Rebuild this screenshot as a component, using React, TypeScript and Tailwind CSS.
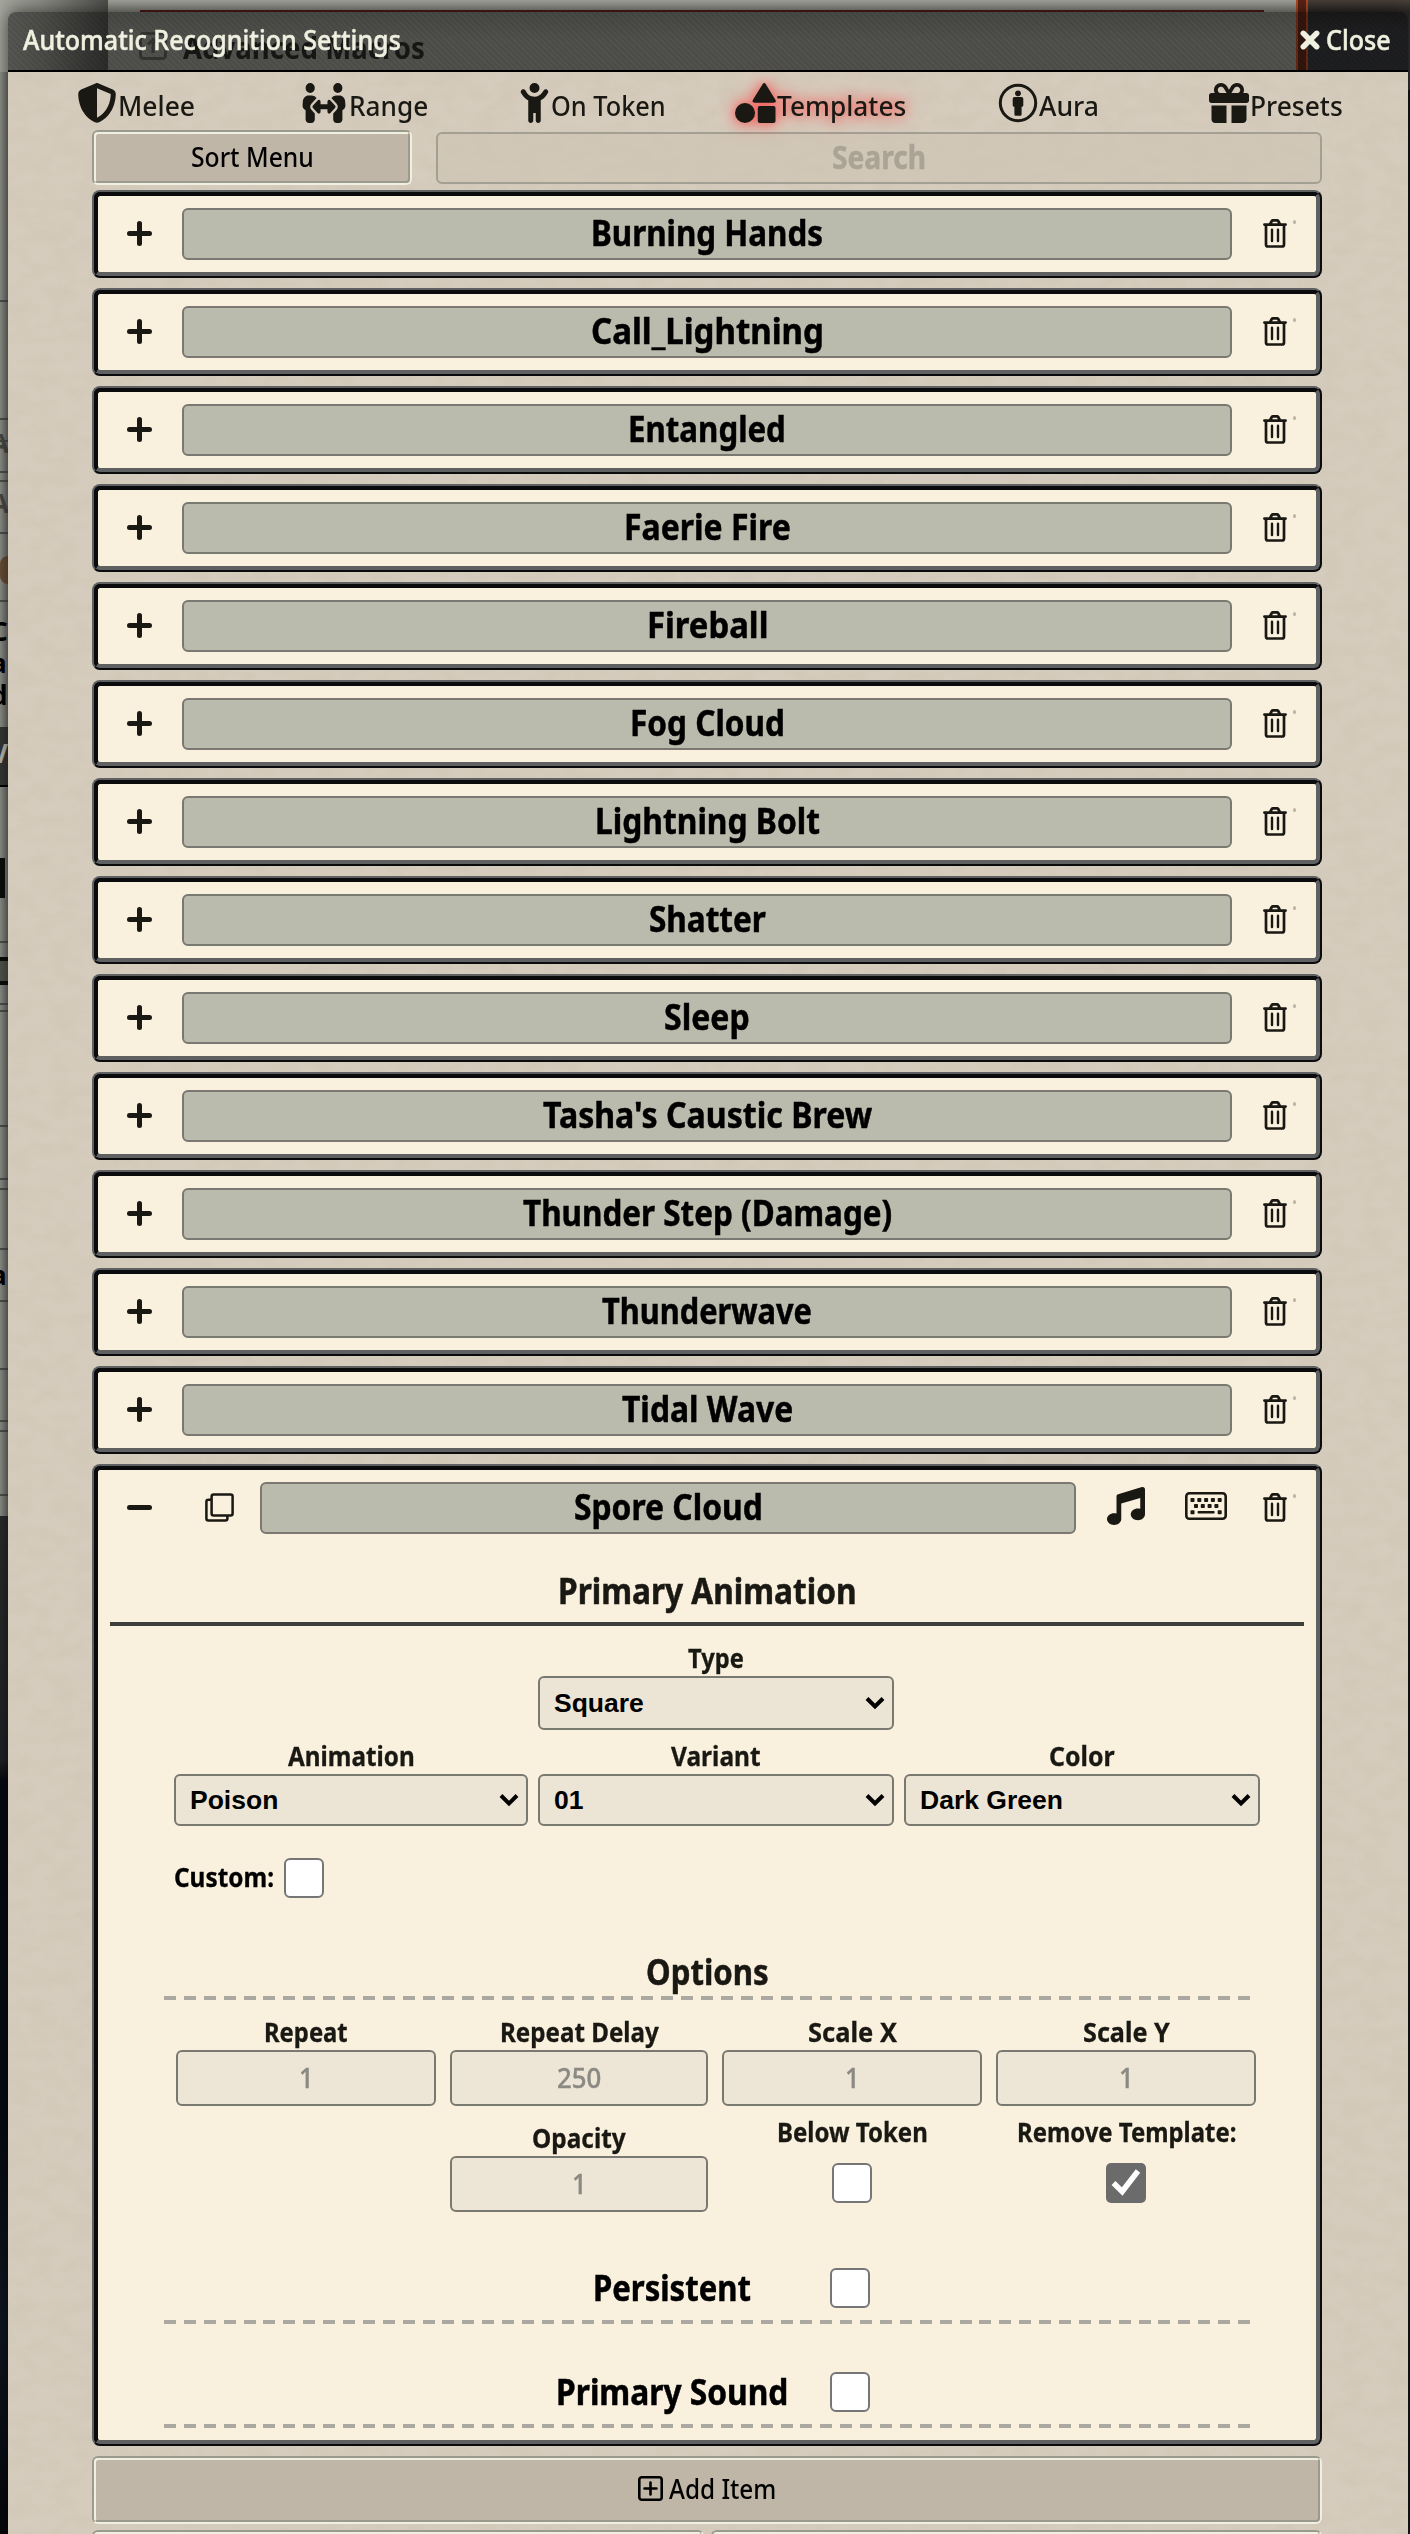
import { useLayoutEffect, useRef, type ReactNode } from "react";
import { FaShieldHalved, FaPeopleArrows, FaChildReaching, FaGift, FaMusic } from "react-icons/fa6";

/** A single line of text condensed or widened to an exact width. */
function Fit({ w, children, className = "" }: { w: number; children: string; className?: string }) {
  const ref = useRef<HTMLSpanElement>(null);
  useLayoutEffect(() => {
    const el = ref.current;
    if (el) el.style.transform = `scaleX(${w / el.offsetWidth})`;
  }, [w, children]);
  return (
    <span className={`inline-block shrink-0 ${className}`} style={{ width: w }}>
      <span ref={ref} className="inline-block origin-left whitespace-nowrap">
        {children}
      </span>
    </span>
  );
}

const ITEMS: [string, number][] = [
  ["Burning Hands", 232],
  ["Call_Lightning", 233],
  ["Entangled", 158],
  ["Faerie Fire", 167],
  ["Fireball", 121],
  ["Fog Cloud", 155],
  ["Lightning Bolt", 225],
  ["Shatter", 117],
  ["Sleep", 86],
  ["Tasha's Caustic Brew", 329],
  ["Thunder Step (Damage)", 369],
  ["Thunderwave", 210],
  ["Tidal Wave", 171],
];

function Bevel({ children, className = "" }: { children?: ReactNode; className?: string }) {
  return (
    <div className={`rounded-[8px] border-2 border-t-[#5f6062] border-r-[#0b0b0d] border-b-[#0b0b0d] border-l-[#5f6062] bg-[#0b0b0d] ${className}`}>
      <div className="h-full rounded-[6px] border-4 border-t-[#0b0b0d] border-r-[#5f6062] border-b-[#5f6062] border-l-[#0b0b0d] bg-[#f9f0de]">
        {children}
      </div>
    </div>
  );
}

function GrooveButton({ children, className = "" }: { children?: ReactNode; className?: string }) {
  return (
    <div className={`rounded-[6px] border-2 border-t-[#9b9a8f] border-r-[#f0efe0] border-b-[#f0efe0] border-l-[#9b9a8f] ${className}`}>
      <div className="flex h-full items-center justify-center rounded-[4px] border-2 border-t-[#f0efe0] border-r-[#9b9a8f] border-b-[#9b9a8f] border-l-[#f0efe0] bg-[#c0b6a8] text-[27.5px] font-medium text-black">
        {children}
      </div>
    </div>
  );
}

function Trash() {
  return (
    <svg viewBox="0 0 24 29" className="h-[29px] w-6" fill="none" stroke="#191813" strokeWidth="2.7" strokeLinecap="round" strokeLinejoin="round">
      <path d="M1.400 5.600h21.200M7.200 5l1.600-3q.4-.6 1-.6h4.400q.6 0 1 .6L16.800 5M3 5.800V25.500q0 2 2 2h14q2 0 2-2V5.800" />
      <path d="M9 10.800v11.200M15 10.800v11.200" strokeWidth="2.400" />
    </svg>
  );
}

function Clone() {
  return (
    <svg viewBox="0 0 29 29" className="size-[29px]" fill="none" stroke="#191813" strokeWidth="2.500" strokeLinejoin="round">
      <rect x="6.600" y="1.400" width="21" height="21" rx="2" />
      <path d="M6 6.800H3.400q-2 0-2 2V25.500q0 2 2 2h17q2 0 2-2V23" />
    </svg>
  );
}

function Keyboard() {
  return (
    <svg viewBox="0 0 42 28" className="h-7 w-[42px]">
      <rect x="1.300" y="1.300" width="39.400" height="25.400" rx="3" fill="none" stroke="#191813" strokeWidth="2.600" />
      <g fill="#191813">
        {[5.5, 12.3, 19.1, 25.9, 32.700].map((x) => (
          <rect key={x} x={x} y="6" width="4" height="4" rx=".8" />
        ))}
        {[9, 15.8, 22.6, 29.400].map((x) => (
          <rect key={x} x={x} y="12" width="4" height="4" rx=".8" />
        ))}
        <rect x="5.500" y="18.200" width="4" height="4" rx=".8" />
        <rect x="12.600" y="18.900" width="17" height="2.700" rx=".8" />
        <rect x="32.700" y="18.200" width="4" height="4" rx=".8" />
      </g>
    </svg>
  );
}

function AuraIcon() {
  return (
    <svg viewBox="0 0 40 40" className="size-10">
      <circle cx="20" cy="20" r="17.700" fill="none" stroke="#191813" strokeWidth="3" />
      <circle cx="20" cy="10.300" r="2.900" fill="#191813" />
      <path d="M16.500 14h7q1.800 0 1.800 1.800v6.700q0 1.300-1.700 1.300V31.300q0 1.500-1.300 1.500h-4.600q-1.300 0-1.300-1.500V23.800q-1.700 0-1.700-1.300v-6.700q0-1.800 1.800-1.800z" fill="#191813" />
    </svg>
  );
}

function ShapesIcon() {
  return (
    <svg viewBox="0 0 41 40" className="h-10 w-[41px]" fill="#191813">
      <path d="M27.600 1.200q1.600-2.400 3.200 0L40.400 16.800q1.300 2.800-1.600 3H19.600q-2.900-.2-1.600-3z" />
      <circle cx="10" cy="30" r="10" />
      <rect x="22.800" y="23" width="17.700" height="17" rx="2" />
    </svg>
  );
}

function NameField({ name, w, className }: { name: string; w: number; className: string }) {
  return (
    <div className={`flex h-[52px] items-center justify-center rounded-[6px] border-2 border-[#7a7971] bg-[#bbbbad] pb-[3px] text-[35px] leading-none font-bold text-black [-webkit-text-stroke:0.5px_#000] ${className}`}>
      <Fit w={w}>{name}</Fit>
    </div>
  );
}

function Speck() {
  return <div className="-mt-[23px] ml-[6px] h-1 w-[3px] rounded-full bg-[#bdb5a5]" />;
}

function ItemRow({ name, w }: { name: string; w: number }) {
  return (
    <Bevel className="mb-[10px] h-[88px]">
      <div className="flex h-full items-center">
        <svg viewBox="0 0 25 25" className="mb-px ml-[29px] size-[25px]" stroke="#191813" strokeWidth="5" strokeLinecap="round">
          <path d="M12.500 2.500v20M2.500 12.500h20" />
        </svg>
        <NameField name={name} w={w} className="ml-[30px] w-[1050px]" />
        <div className="mb-px ml-[31px] flex items-center">
          <Trash />
          <Speck />
        </div>
      </div>
    </Bevel>
  );
}

function FieldLabel({ children, w }: { children: string; w: number }) {
  return (
    <div className="flex h-9 items-center justify-center text-[27.5px] leading-none font-bold [-webkit-text-stroke:0.3px_#191813]">
      <Fit w={w}>{children}</Fit>
    </div>
  );
}

function Select({ label, lw, value, h }: { label: string; lw: number; value: string; h: string }) {
  return (
    <div>
      <FieldLabel w={lw}>{label}</FieldLabel>
      <div className={`flex items-center justify-between rounded-[6px] border-2 border-[#7a7971] bg-[#ece4d5] pr-[7px] pl-[14px] font-['Liberation_Sans',sans-serif] text-[26.5px] font-bold text-black ${h}`}>
        <span className="pt-[2px]">{value}</span>
        <svg viewBox="0 0 20 14" className="h-[14px] w-5" fill="none" stroke="#000" strokeWidth="4">
          <path d="M2 2.500l8 8 8-8" />
        </svg>
      </div>
    </div>
  );
}

function NumberField({ label, lw, value, vw }: { label: string; lw: number; value: string; vw: number }) {
  return (
    <div>
      <FieldLabel w={lw}>{label}</FieldLabel>
      <div className="flex h-14 items-center justify-center rounded-[6px] border-2 border-[#7a7971] bg-[#ede6d7] text-[27.5px] leading-none font-medium text-[#8b8983] [-webkit-text-stroke:0.4px_#8b8983]">
        <Fit w={vw}>{value}</Fit>
      </div>
    </div>
  );
}

function Checkbox({ checked = false }: { checked?: boolean }) {
  return checked ? (
    <div className="flex size-10 items-center justify-center rounded-[5px] bg-[#6b6b6b]">
      <svg viewBox="0 0 40 40" className="size-10" fill="none" stroke="#fff" strokeWidth="5.500">
        <path d="M7.500 20l8.700 8.500L32 8" />
      </svg>
    </div>
  ) : (
    <div className="size-10 rounded-[6px] border-2 border-[#767676] bg-white" />
  );
}

function CheckField({ label, w, checked }: { label: string; w: number; checked?: boolean }) {
  return (
    <div className="flex flex-col items-center">
      <div className="flex h-[24px] items-center text-[27.5px] leading-none font-bold [-webkit-text-stroke:0.3px_#191813]">
        <Fit w={w}>{label}</Fit>
      </div>
      <div className="mt-[19px]">
        <Checkbox checked={checked} />
      </div>
    </div>
  );
}

function Dashes({ className = "" }: { className?: string }) {
  return <div className={`h-1 w-[1086px] bg-[repeating-linear-gradient(90deg,#aaa8a1_0_12px,transparent_12px_19.890px)] ${className}`} />;
}

function ToggleSection({ label, w, className }: { label: string; w: number; className: string }) {
  return (
    <div className={className}>
      <div className="flex h-10 items-center pl-[350px]">
        <div className="flex w-[315px] justify-center pb-[2px] text-[35px] leading-none font-bold text-black [-webkit-text-stroke:0.5px_#000]">
          <Fit w={w}>{label}</Fit>
        </div>
        <div className="ml-px">
          <Checkbox />
        </div>
      </div>
      <Dashes className="mt-3" />
    </div>
  );
}

const TABS: { label: string; w: number; icon: ReactNode; iw: string; active?: boolean }[] = [
  { label: "Melee", w: 77, icon: <FaShieldHalved className="size-10" />, iw: "w-10" },
  { label: "Range", w: 79, icon: <FaPeopleArrows preserveAspectRatio="none" className="h-10 w-[46px]" />, iw: "w-[47px]" },
  { label: "On Token", w: 115, icon: <FaChildReaching className="size-10" />, iw: "w-[31px]" },
  { label: "Templates", w: 129, icon: <ShapesIcon />, iw: "w-[41px]", active: true },
  { label: "Aura", w: 60, icon: <AuraIcon />, iw: "w-10" },
  { label: "Presets", w: 93, icon: <FaGift className="size-10" />, iw: "w-10" },
];

const EDGE_LETTERS: [string, number, string][] = [
  ["A", 430, "text-[#4b4b48]"],
  ["A", 490, "text-[#4b4b48]"],
  ["C", 618, "text-black"],
  ["a", 650, "text-black"],
  ["d", 682, "text-black"],
  ["V", 740, "text-[#bdbdb5]"],
  ["a", 1262, "text-black"],
];

/** What shows around and through the window: other sheets on the desktop. */
function Backdrop() {
  return (
    <div className="absolute inset-0 overflow-hidden bg-[#15171b]">
      <div className="absolute top-[1516px] left-0 h-[1018px] w-2 bg-[linear-gradient(180deg,#2c2e2d,#202225_24%,#070a12_26%,#070b13_60%,#101722_80%,#05070b)]" />
      <div className="absolute top-0 left-0 h-[1516px] w-[108px] bg-[linear-gradient(90deg,#a5a69c,#8b8c85_40%,#4d4d4a)]" />
      <div className="absolute top-[72px] left-0 h-[1444px] w-2 bg-[linear-gradient(90deg,#94948e,#70706c)]" />
      <div className="absolute top-[727px] left-0 h-[60px] w-2 border-b-2 border-black bg-[#383836]" />
      <div className="absolute top-0 left-[108px] h-[90px] w-[1188px] bg-[linear-gradient(180deg,#a3a49b,#83847d_12px,#95968f_40px)]" />
      <div className="absolute top-[10px] left-[140px] h-[2px] w-[1124px] bg-[#4f1b15]" />
      <div className="absolute top-[32px] left-[139px] flex h-7 items-center gap-[16px] text-[30px] leading-none font-bold text-[#262624]">
        <svg viewBox="0 0 28 28" className="size-7" fill="none" stroke="#5c5c58" strokeWidth="3">
          <rect x="1.500" y="1.500" width="25" height="25" rx="3" />
          <path d="M14 21V8M9 12.500L14 7.500l5 5" />
        </svg>
        <Fit w={242} className="pt-[3px]">Advanced Macros</Fit>
      </div>
      <div className="absolute top-0 left-[1296px] h-[90px] w-[12px] border-x-2 border-[#b5481f] bg-[#5a2416]" />
      <div className="absolute top-0 left-[1308px] h-[90px] w-[102px] bg-[linear-gradient(180deg,#4a4039,#2b2826_12px,#34353a_32px)]" />
      {[300, 418, 440, 471, 480, 532, 600, 941, 1003, 1010, 1125, 1178, 1188, 1248, 1300, 1368, 1420, 1430, 1494].map((y) => (
        <div key={y} className="absolute left-0 h-[2px] w-2 bg-[#50504d]" style={{ top: y }} />
      ))}
      {EDGE_LETTERS.map(([ch, y, color]) => (
        <div key={y} className={`absolute left-[-9px] text-[26px] leading-none font-bold ${color}`} style={{ top: y }}>
          {ch}
        </div>
      ))}
      <div className="absolute top-[556px] left-0 h-7 w-2 rounded-l-full bg-[#6b5038]" />
      <div className="absolute top-[858px] left-0 h-10 w-[5px] bg-[#0d0d0c]" />
      <div className="absolute top-[957px] left-0 h-7 w-2 border-y-4 border-[#0d0d0c] bg-[#55554f]" />
    </div>
  );
}

export default function App() {
  return (
    <div className="relative h-[2534px] w-[1410px] overflow-hidden font-['Noto_Sans',sans-serif] text-[#191813]">
      <Backdrop />
      <div className="relative mt-3 ml-2 h-[2522px] w-[1400px] overflow-hidden rounded-t-[8px] shadow-[0_0_18px_rgba(0,0,0,0.6)]">
        <header className="flex h-[60px] items-center justify-between border-b-2 border-black bg-[repeating-linear-gradient(45deg,rgba(4,4,4,0.51)_0_2px,rgba(6,6,6,0.48)_2px_4px)] pr-[17px] pl-[15px] text-[27px] leading-none font-medium text-[#f0f0e0] [-webkit-text-stroke:0.5px_#f0f0e0]">
          <Fit w={378} className="pb-[3px]">Automatic Recognition Settings</Fit>
          <div className="flex items-center">
            <svg viewBox="0 0 20 20" className="mr-[6px] mb-[3px] size-5" stroke="#f0f0e0" strokeWidth="5.500" strokeLinecap="round">
              <path d="M3.300 3.300l13.400 13.400M16.700 3.300L3.300 16.700" />
            </svg>
            <Fit w={65} className="pb-[3px]">Close</Fit>
          </div>
        </header>

        <main className="relative h-[2462px] bg-[#d6ccbd]">
          <svg className="pointer-events-none absolute inset-0 h-full w-full opacity-30">
            <filter id="leather" x="0" y="0" width="100%" height="100%">
              <feTurbulence type="fractalNoise" baseFrequency="0.045 0.07" numOctaves="3" seed="8" />
              <feColorMatrix values="0 0 0 0 0.55  0 0 0 0 0.5  0 0 0 0 0.4  1.6 0 0 0 -0.6" />
            </filter>
            <rect width="100%" height="100%" filter="url(#leather)" />
          </svg>
          <div className="relative">
            <nav className="ml-[14px] grid h-[58px] w-[1368px] grid-cols-6">
              {TABS.map((t) => (
                <div
                  key={t.label}
                  className={`flex h-[62px] items-center justify-center text-[27.5px] leading-none font-medium ${
                    t.active ? "[filter:drop-shadow(0_0_6px_rgba(255,60,60,0.7))_drop-shadow(0_0_9px_rgba(255,80,80,0.5))]" : ""
                  }`}
                >
                  <div className={`flex justify-center ${t.iw}`}>{t.icon}</div>
                  <Fit w={t.w} className="ml-px pt-[5px]">{t.label}</Fit>
                </div>
              ))}
            </nav>

            <div className="ml-[84px] w-[1230px]">
              <div className="mb-[5px] flex h-[55px]">
                <GrooveButton className="h-[55px] w-[320px]">
                  <Fit w={123} className="pb-[2px]">Sort Menu</Fit>
                </GrooveButton>
                <div className="mt-[2px] ml-[24px] flex h-[52px] flex-1 items-center justify-center rounded-[6px] border-2 border-[#a39f93] bg-[#cfc5b5]/70 pb-[3px] text-[33px] leading-none font-bold text-[#aaa396] [-webkit-text-stroke:0.5px_#aaa396]">
                  <Fit w={94}>Search</Fit>
                </div>
              </div>

              {ITEMS.map(([name, w]) => (
                <ItemRow key={name} name={name} w={w} />
              ))}

              <Bevel className="h-[982px]">
                <div className="flex h-[76px] items-center">
                  <svg viewBox="0 0 25 5" className="mb-px ml-[29px] h-[5px] w-[25px]" stroke="#191813" strokeWidth="5" strokeLinecap="round">
                    <path d="M2.500 2.500h20" />
                  </svg>
                  <div className="mb-px ml-[53px]">
                    <Clone />
                  </div>
                  <NameField name="Spore Cloud" w={189} className="ml-[26px] w-[816px]" />
                  <FaMusic className="ml-[31px] size-[38px] -translate-y-[2px]" />
                  <div className="-mt-[4px] ml-[40px]">
                    <Keyboard />
                  </div>
                  <div className="mb-px ml-[36px] flex items-center">
                    <Trash />
                    <Speck />
                  </div>
                </div>

                <div className="mx-3 flex h-[80px] items-center justify-center border-b-4 border-[#3d3d3a] pt-[13px] text-[35px] leading-none font-bold [-webkit-text-stroke:0.5px_#191813]">
                  <Fit w={298}>Primary Animation</Fit>
                </div>

                <div className="ml-[66px] w-[1096px]">
                  <div className="ml-[10px] w-[1086px]">
                    <div className="ml-[364px] w-[356px] pt-[14px]">
                      <Select label="Type" lw={56} value="Square" h="h-[54px]" />
                    </div>
                    <div className="mt-2 grid grid-cols-[354px_356px_356px] gap-[10px]">
                      <Select label="Animation" lw={127} value="Poison" h="h-[52px]" />
                      <Select label="Variant" lw={90} value="01" h="h-[52px]" />
                      <Select label="Color" lw={66} value="Dark Green" h="h-[52px]" />
                    </div>
                    <div className="mt-8 flex h-10 items-center gap-[10px] text-[27.5px] leading-none font-bold text-black [-webkit-text-stroke:0.3px_#000]">
                      <Fit w={100} className="pb-[3px]">Custom:</Fit>
                      <Checkbox />
                    </div>
                  </div>

                  <div className="mt-12 flex h-[50px] w-[1086px] items-center justify-center text-[35px] leading-none font-bold [-webkit-text-stroke:0.5px_#191813]">
                    <Fit w={123}>Options</Fit>
                  </div>
                  <Dashes />

                  <div className="ml-3 grid w-[1080px] grid-cols-[260px_258px_260px_260px] gap-[14px] pt-[14px]">
                    <NumberField label="Repeat" lw={84} value="1" vw={15} />
                    <NumberField label="Repeat Delay" lw={159} value="250" vw={44} />
                    <NumberField label="Scale X" lw={89} value="1" vw={15} />
                    <NumberField label="Scale Y" lw={87} value="1" vw={15} />
                    <div />
                    <NumberField label="Opacity" lw={94} value="1" vw={15} />
                    <CheckField label="Below Token" w={151} />
                    <CheckField label="Remove Template:" w={219} checked />
                  </div>

                  <ToggleSection label="Persistent" w={158} className="mt-14" />
                  <ToggleSection label="Primary Sound" w={232} className="mt-12" />
                </div>
              </Bevel>

              <GrooveButton className="mt-[10px] h-[68px]">
                <svg viewBox="0 0 25 25" className="mr-[6px] mb-[3px] size-[25px]" fill="none" stroke="#000" strokeWidth="2.600" strokeLinecap="round">
                  <rect x="1.300" y="1.300" width="22.400" height="22.400" rx="2.500" />
                  <path d="M12.500 6.500v12M6.500 12.500h12" />
                </svg>
                <Fit w={107} className="pb-[3px]">Add Item</Fit>
              </GrooveButton>
              <div className="mt-[6px] flex justify-between">
                <GrooveButton className="h-[68px] w-[612px]" />
                <GrooveButton className="h-[68px] w-[611px]" />
              </div>
            </div>
          </div>
        </main>
      </div>
    </div>
  );
}
